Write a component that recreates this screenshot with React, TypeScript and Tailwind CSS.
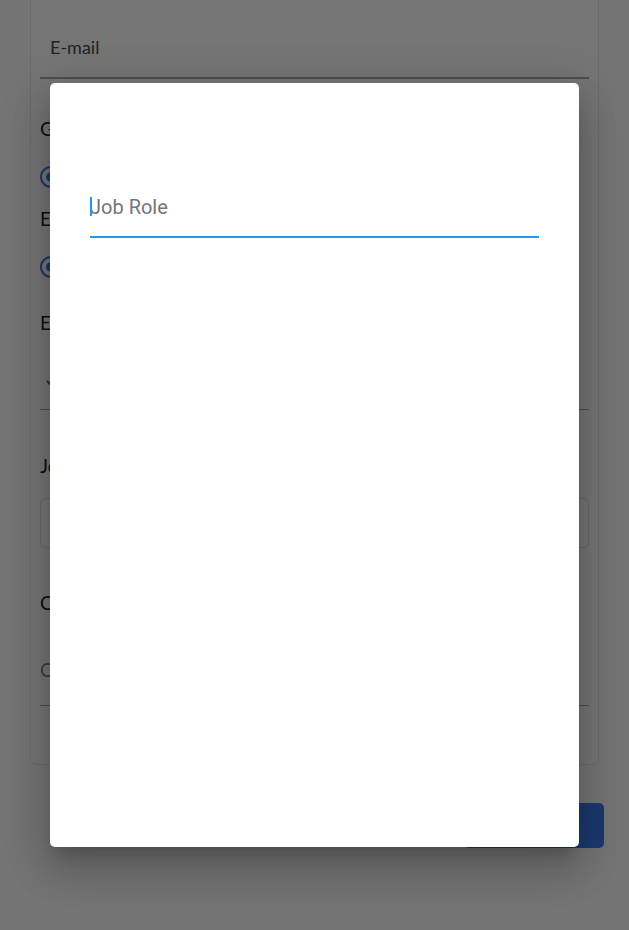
import React from "react";

function Radio({ label }: { label: string }) {
  return (
    <div className="flex items-center gap-2 h-[22px]">
      <span className="w-[22px] h-[22px] rounded-full border-2 border-[#3d6ed6] flex items-center justify-center">
        <span className="w-[10px] h-[10px] rounded-full bg-[#3d6ed6]" />
      </span>
      <span className="text-[16px] text-[#222]">{label}</span>
    </div>
  );
}

export default function App() {
  return (
    <div
      className="relative h-[930px] w-full overflow-hidden bg-[#e8e8e8]"
      style={{ fontFamily: "Lato, 'Open Sans', sans-serif" }}
    >
      <div className="pl-[30px] pr-[30px]">
        <div className="w-[569px] h-[767px] -mt-[2px] border border-[#d6d6d6] border-t-0 rounded-b-[6px] bg-[#ebebeb] px-[9px]">
          <div className="h-[81px] flex flex-col">
            <div className="flex-1 flex items-center pl-[10px] pt-[20px] text-[18px] text-[#444]">E-mail</div>
            <div className="h-[2px] bg-[#9a9a9a]" />
          </div>
          <div className="mt-[39px] text-[19px] text-[#1c1c1c] leading-[22px]">Gender</div>
          <div className="mt-[26px]">
            <Radio label="Male" />
          </div>
          <div className="mt-[20px] text-[19px] text-[#1c1c1c] leading-[22px]">Employment</div>
          <div className="mt-[26px]">
            <Radio label="Full time" />
          </div>
          <div className="mt-[34px] text-[19px] text-[#1c1c1c] leading-[22px]">Education</div>
          <div className="mt-[20px] h-[56px] flex flex-col">
            <div className="flex-1 flex items-center pl-[6px] pt-[4px] text-[#555]">
              <svg width="12" height="8" viewBox="0 0 12 8" fill="none">
                <path d="M1 1l5 5 5-5" stroke="#555" strokeWidth="2" />
              </svg>
            </div>
            <div className="h-[1px] bg-[#9a9a9a]" />
          </div>
          <div className="mt-[45px] text-[19px] text-[#1c1c1c] leading-[22px]">Job Role</div>
          <div className="mt-[21px] h-[50px] rounded-[6px] border border-[#cfcfcf] bg-[#ececec]" />
          <div className="mt-[44px] text-[19px] text-[#1c1c1c] leading-[22px]">Comments</div>
          <div className="mt-[31px] h-[61px] flex flex-col">
            <div className="flex-1 flex items-center pb-[10px] text-[19px] text-[#777]">Comments</div>
            <div className="h-[1px] bg-[#9a9a9a]" />
          </div>
        </div>
        <div className="flex justify-end w-[574px] mt-[38px]">
          <div className="w-[140px] h-[45px] rounded-[5px] bg-[#3672de]" />
        </div>
      </div>

      <div className="absolute inset-0 bg-black/50 flex justify-center">
        <div className="mt-[83px] w-[529px] h-[764px] bg-white rounded-[5px] shadow-[0_11px_15px_-7px_rgba(0,0,0,0.2),0_24px_38px_3px_rgba(0,0,0,0.14),0_9px_46px_8px_rgba(0,0,0,0.12)] px-[40px] pt-[100px]">
          <div className="relative h-[55px] border-b-2 border-[#2196f3] flex items-center">
            <span className="absolute left-0 top-[14px] w-[2px] h-[19px] bg-[#2196f3]" />
            <input
              className="w-full outline-none bg-transparent text-[20px] text-[#222] placeholder:text-[#757575] pb-[5px]"
              style={{ fontFamily: "Roboto, sans-serif", caretColor: "transparent" }}
              placeholder="Job Role"
            />
          </div>
        </div>
      </div>
    </div>
  );
}
